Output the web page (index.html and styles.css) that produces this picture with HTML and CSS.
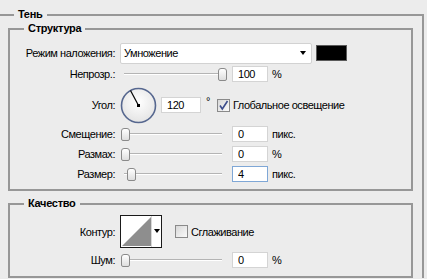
FILE: index.html
```html
<!DOCTYPE html>
<html lang="ru">
<head>
    <meta charset="UTF-8">
    <title>Тень</title>
    <link rel="stylesheet" href="styles.css">
</head>
<body>
    <fieldset class="group outer">
        <legend>Тень</legend>

        <fieldset class="group structure">
            <legend>Структура</legend>

            <div class="row row-blend">
                <label class="lbl">Режим наложения:</label>
                <div class="select">
                    <span class="select-text">Умножение</span>
                    <span class="arrow"></span>
                </div>
                <div class="swatch"></div>
            </div>

            <div class="row row-opacity">
                <label class="lbl">Непрозр.:</label>
                <div class="slider">
                    <div class="track"></div>
                    <div class="thumb" style="left: 97px"></div>
                </div>
                <input class="num" type="text" value="100">
                <span class="unit">%</span>
            </div>

            <div class="row row-angle">
                <label class="lbl">Угол:</label>
                <svg class="dial" width="37" height="37" viewBox="0 0 37 37">
                    <defs>
                        <radialGradient id="dialFill" cx="50%" cy="40%" r="60%">
                            <stop offset="0" stop-color="#ffffff"/>
                            <stop offset="1" stop-color="#e4e4e4"/>
                        </radialGradient>
                    </defs>
                    <circle cx="18.5" cy="18.5" r="17" fill="url(#dialFill)" stroke="#56678f" stroke-width="1.6"/>
                    <line x1="18.5" y1="18.5" x2="10.5" y2="3.5" stroke="#000" stroke-width="1.2"/>
                    <rect x="17" y="17" width="3" height="3" fill="#000"/>
                </svg>
                <input class="num num-angle" type="text" value="120">
                <span class="deg">°</span>
                <span class="check checked">
                    <svg width="11" height="11" viewBox="0 0 11 11"><path d="M2 5.5 L4.3 9 L9.5 1" fill="none" stroke="#3b4c8c" stroke-width="1.6"/></svg>
                </span>
                <span class="check-label">Глобальное освещение</span>
            </div>

            <div class="row row-offset">
                <label class="lbl">Смещение:</label>
                <div class="slider">
                    <div class="track"></div>
                    <div class="thumb" style="left: 0px"></div>
                </div>
                <input class="num" type="text" value="0">
                <span class="unit">пикс.</span>
            </div>

            <div class="row">
                <label class="lbl">Размах:</label>
                <div class="slider">
                    <div class="track"></div>
                    <div class="thumb" style="left: 0px"></div>
                </div>
                <input class="num" type="text" value="0">
                <span class="unit">%</span>
            </div>

            <div class="row">
                <label class="lbl">Размер:</label>
                <div class="slider">
                    <div class="track"></div>
                    <div class="thumb" style="left: 6px"></div>
                </div>
                <input class="num focus" type="text" value="4">
                <span class="unit">пикс.</span>
            </div>
        </fieldset>

        <fieldset class="group quality">
            <legend>Качество</legend>

            <div class="row row-contour">
                <label class="lbl">Контур:</label>
                <div class="contour">
                    <svg width="42" height="33" viewBox="0 0 42 33">
                        <rect x="0.5" y="0.5" width="41" height="32" fill="#fff" stroke="#1a1a1a"/>
                        <polygon points="2,31 31,2 31,31" fill="#8e8e8e"/>
                        <line x1="31.5" y1="1" x2="31.5" y2="32" stroke="#d8d8d8"/>
                        <polygon points="34,14 40,14 37,18" fill="#000"/>
                    </svg>
                </div>
                <span class="check"></span>
                <span class="check-label">Сглаживание</span>
            </div>

            <div class="row row-noise">
                <label class="lbl">Шум:</label>
                <div class="slider">
                    <div class="track"></div>
                    <div class="thumb" style="left: 0px"></div>
                </div>
                <input class="num" type="text" value="0">
                <span class="unit">%</span>
            </div>
        </fieldset>
    </fieldset>
</body>
</html>
```

FILE: styles.css
```css
body {
    margin: 0;
    background-color: #ececec;
    font-family: "Liberation Sans", Arial, sans-serif;
    font-size: 11px;
    letter-spacing: -0.45px;
    color: #000;
    overflow: hidden;
}
.group {
    border: 2px solid #979797;
    margin: 0;
    padding: 0;
    min-width: 0;
}
.group legend {
    font-weight: bold;
    font-size: 11px;
    letter-spacing: -0.3px;
    padding: 0 4px;
    margin-left: 14px;
    line-height: 13px;
}
.outer {
    margin: 8px 3px 0 -4px;
    padding: 1px 9px 0 10px;
    border-bottom: none;
}
.outer > legend {
    margin-left: 6px;
}
.structure {
    padding: 7px 0 7px;
}
.quality {
    margin-top: 6px;
    padding: 5px 0 8px;
}
.row {
    display: flex;
    align-items: center;
    height: 16px;
    margin-top: 4px;
}
.row-blend {
    height: 22px;
    margin-top: 0;
}
.row-opacity, .row-offset {
    margin-top: 2px;
}
.row-angle {
    height: 38px;
}
.row-contour {
    height: 33px;
    margin-top: 0;
}
.row-noise {
    margin-top: 4px;
}
.lbl {
    flex: none;
    width: 105px;
    margin-right: 5px;
    text-align: right;
}
.select {
    display: flex;
    align-items: center;
    justify-content: space-between;
    width: 192px;
    height: 21px;
    padding: 0 5px 0 3px;
    box-sizing: border-box;
    background-color: #fff;
    border: 1px solid #d2d2d2;
    border-radius: 2px;
}
.select .arrow {
    width: 0;
    height: 0;
    border-left: 3px solid transparent;
    border-right: 3px solid transparent;
    border-top: 4px solid #000;
}
.swatch {
    width: 31px;
    height: 16px;
    margin-left: 4px;
    box-sizing: border-box;
    background-color: #000;
    border: 1px solid #5a5a5a;
}
.slider {
    position: relative;
    flex: none;
    width: 107px;
    height: 16px;
    margin-left: 1px;
    margin-right: 4px;
}
.track {
    position: absolute;
    left: 3px;
    right: 6px;
    top: 7px;
    height: 1px;
    background-color: #b4b4b4;
    border-bottom: 1px solid #fff;
}
.thumb {
    position: absolute;
    top: 2px;
    width: 7px;
    height: 11px;
    background: linear-gradient(#ffffff, #dedede);
    border: 1px solid #8a8a8a;
    border-radius: 3px 3px 2px 2px;
}
.num {
    flex: none;
    width: 36px;
    height: 16px;
    box-sizing: border-box;
    padding: 0 0 0 5px;
    margin: 0;
    border: 1px solid #d4d4d4;
    background-color: #fff;
    font-family: inherit;
    font-size: inherit;
    letter-spacing: inherit;
    color: #000;
    outline: none;
}
.num-angle {
    width: 40px;
    margin-left: 4px;
}
.num.focus {
    border-color: #7fa7d6;
}
.unit {
    margin-left: 4px;
}
.deg {
    margin-left: 5px;
    align-self: flex-start;
    margin-top: 9px;
}
.check {
    flex: none;
    display: flex;
    align-items: center;
    justify-content: center;
    width: 13px;
    height: 13px;
    box-sizing: border-box;
    border: 1px solid #8a8a8a;
    background: linear-gradient(135deg, #d8d8d8, #fafafa);
}
.row-angle .check {
    margin-left: 7px;
}
.row-contour .check {
    margin-left: 13px;
}
.check-label {
    margin-left: 3px;
}
.contour {
    display: flex;
}
```
